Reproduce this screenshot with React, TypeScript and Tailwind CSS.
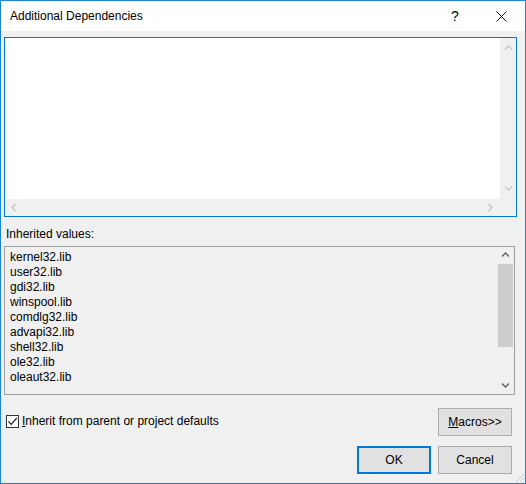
import React from "react";

const libs = [
  "kernel32.lib",
  "user32.lib",
  "gdi32.lib",
  "winspool.lib",
  "comdlg32.lib",
  "advapi32.lib",
  "shell32.lib",
  "ole32.lib",
  "oleaut32.lib",
];

// small chevron for scrollbar arrows
function Chevron({ dir, color }: { dir: "up" | "down" | "left" | "right"; color: string }) {
  const d = {
    up: "M1 5.5 L4.5 2 L8 5.5",
    down: "M1 2.5 L4.5 6 L8 2.5",
    left: "M5.5 1 L2 4.5 L5.5 8",
    right: "M2.5 1 L6 4.5 L2.5 8",
  }[dir];
  return (
    <svg width="9" height="9" viewBox="0 0 9 9">
      <path d={d} fill="none" stroke={color} strokeWidth="1.3" />
    </svg>
  );
}

function Button({ children, primary }: { children: React.ReactNode; primary?: boolean }) {
  return (
    <button
      className={`w-[74px] h-[28px] bg-[#e1e1e1] text-[12px] text-black flex items-center justify-center ${
        primary ? "border-2 border-[#0078d7]" : "border border-[#adadad]"
      }`}
    >
      {children}
    </button>
  );
}

export default function App() {
  return (
    <div className="relative w-[526px] h-[484px] border border-[#1883d7] bg-[#f0f0f0] flex flex-col font-['Liberation_Sans',Arial,sans-serif] text-[12px] text-black select-none">
      {/* title bar */}
      <div className="h-[30px] bg-white flex items-center shrink-0">
        <span className="pl-[9px] text-[12px] flex-1">Additional Dependencies</span>
        <span className="w-[46px] text-center text-[14px] pt-[1px]">?</span>
        <div className="w-[46px] flex justify-center mr-[1px]">
          <svg width="11" height="11" viewBox="0 0 11 11">
            <path d="M0.5 0.5 L10.5 10.5 M10.5 0.5 L0.5 10.5" stroke="#111" strokeWidth="1" />
          </svg>
        </div>
      </div>

      <div className="flex flex-col pl-[3px] pr-[8px]">
        {/* edit box */}
        <div className="mt-[6px] w-[513px] h-[180px] border border-[#0078d7] bg-white grid grid-cols-[1fr_16px] grid-rows-[161px_17px]">
          <div className="bg-white" />
          <div className="bg-[#f0f0f0] flex flex-col justify-between items-center py-[6px]">
            <Chevron dir="up" color="#c6c6c6" />
            <Chevron dir="down" color="#c6c6c6" />
          </div>
          <div className="bg-[#f0f0f0] flex justify-between items-center px-[5px]">
            <Chevron dir="left" color="#c6c6c6" />
            <Chevron dir="right" color="#c6c6c6" />
          </div>
          <div className="bg-[#f0f0f0]" />
        </div>

        <div className="h-[29px] flex items-center pl-[2px] pt-[5px]">Inherited values:</div>

        {/* inherited list */}
        <div className="w-[511px] h-[149px] border border-[#a0a0a0] bg-[#f0f0f0] flex">
          <div className="flex-1 pt-[3px] pl-[5px] flex flex-col">
            {libs.map((l) => (
              <div key={l} className="h-[15px] leading-[15px]">
                {l}
              </div>
            ))}
          </div>
          <div className="w-[17px] flex flex-col items-center">
            <div className="h-[17px] flex items-center justify-center">
              <Chevron dir="up" color="#606060" />
            </div>
            <div className="w-[15px] h-[83px] bg-[#cdcdcd]" />
            <div className="flex-1" />
            <div className="h-[17px] flex items-center justify-center">
              <Chevron dir="down" color="#606060" />
            </div>
          </div>
        </div>

        {/* checkbox + macros */}
        <div className="mt-[13px] flex justify-between items-start">
          <label className="flex items-center mt-[4px] ml-[2px]">
            <span className="w-[13px] h-[13px] border border-[#333] bg-white flex items-center justify-center">
              <svg width="11" height="11" viewBox="0 0 11 11">
                <path d="M1.5 5.5 L4.2 8.3 L9.8 2" fill="none" stroke="#222" strokeWidth="1.2" />
              </svg>
            </span>
            <span className="ml-[3px]">
              <span className="underline">I</span>nherit from parent or project defaults
            </span>
          </label>
          <div className="mr-[5px]">
            <Button>
              <span className="underline">M</span>acros&gt;&gt;
            </Button>
          </div>
        </div>

        {/* OK / Cancel */}
        <div className="mt-[10px] flex justify-end gap-[7px] mr-[5px]">
          <Button primary>OK</Button>
          <Button>Cancel</Button>
        </div>
      </div>

      {/* resize grip */}
      <svg className="absolute right-0 bottom-0" width="12" height="12" viewBox="0 0 12 12">
        <path d="M11 3 L3 11 M11 7 L7 11" stroke="#b8b8b8" strokeWidth="1" strokeDasharray="1 1" />
      </svg>
    </div>
  );
}
